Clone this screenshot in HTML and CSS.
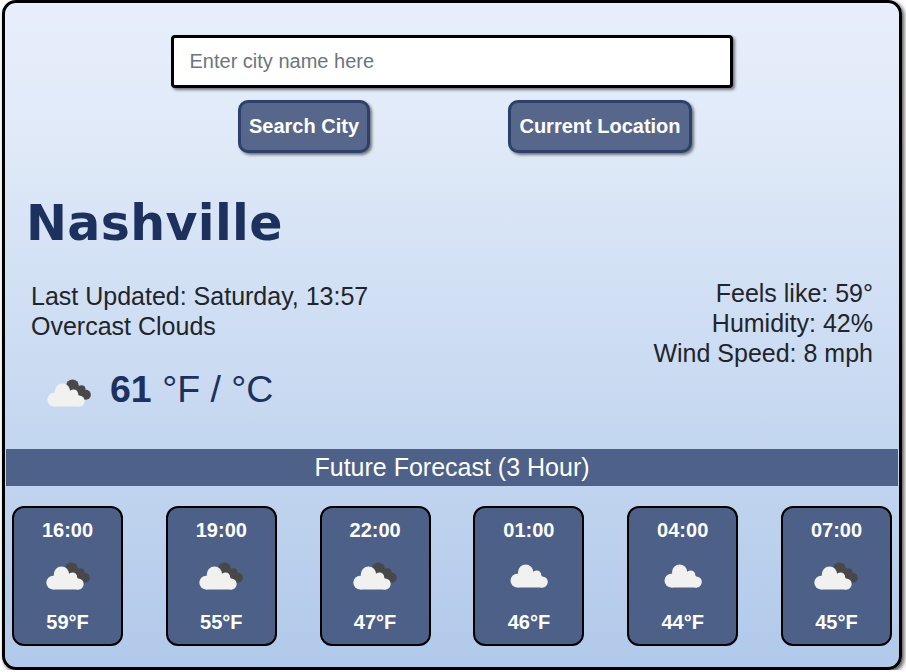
FILE: index.html
```html
<!DOCTYPE html>
<html lang="en">
<head>
<meta charset="utf-8">
<title>Weather</title>
<link rel="stylesheet" href="styles.css">
</head>
<body>
<svg class="symbols" width="0" height="0" aria-hidden="true">
  <symbol id="cloud" viewBox="32 28.5 150 150">
    <g fill="#f1f1f0"><circle cx="72" cy="117.5" r="20.5"/><circle cx="97" cy="92" r="23"/><circle cx="130" cy="101" r="14"/><circle cx="147" cy="121.5" r="16.5"/><path d="M72 138V97l25-5h20l10-3 16 12 6 8v29z"/></g>
  </symbol>
  <symbol id="clouds" viewBox="41.5 22.5 150 150">
    <g fill="#484848"><circle cx="127" cy="76" r="19"/><circle cx="154" cy="86" r="12"/><circle cx="167" cy="103" r="15"/><path d="M120 80l22-6 26 26-4 17-12 4z"/></g>
    <g fill="#f1f1f0"><circle cx="72" cy="117.5" r="20.5"/><circle cx="97" cy="92" r="23"/><circle cx="130" cy="101" r="14"/><circle cx="147" cy="121.5" r="16.5"/><path d="M72 138V97l25-5h20l10-3 16 12 6 8v29z"/></g>
  </symbol>
</svg>
<main class="card">
  <form class="search">
    <input class="city-input" type="text" placeholder="Enter city name here">
    <div class="buttons">
      <button class="btn search-btn" type="button">Search City</button>
      <button class="btn location-btn" type="button">Current Location</button>
    </div>
  </form>
  <h1 class="city">Nashville</h1>
  <section class="details">
    <div class="summary">Last Updated: Saturday, 13:57<br>Overcast Clouds</div>
    <div class="stats">Feels like: 59°<br>Humidity: 42%<br>Wind Speed: 8 mph</div>
  </section>
  <div class="current">
    <svg class="icon"><use href="#clouds"/></svg>
    <div class="temp"><strong>61</strong> °F / °C</div>
  </div>
  <h2 class="bar">Future Forecast (3 Hour)</h2>
  <section class="forecast">
    <div class="hour"><span>16:00</span><svg class="icon"><use href="#clouds"/></svg><span>59°F</span></div>
    <div class="hour"><span>19:00</span><svg class="icon"><use href="#clouds"/></svg><span>55°F</span></div>
    <div class="hour"><span>22:00</span><svg class="icon"><use href="#clouds"/></svg><span>47°F</span></div>
    <div class="hour"><span>01:00</span><svg class="icon"><use href="#cloud"/></svg><span>46°F</span></div>
    <div class="hour"><span>04:00</span><svg class="icon"><use href="#cloud"/></svg><span>44°F</span></div>
    <div class="hour"><span>07:00</span><svg class="icon"><use href="#clouds"/></svg><span>45°F</span></div>
  </section>
</main>
</body>
</html>
```
FILE: styles.css
```css
* { box-sizing: border-box; }
body {
  margin: 0;
  background: #fff;
  font-family: "Liberation Sans", Arial, sans-serif;
  color: #212529;
  overflow: hidden;
}
.symbols { display: block; height: 0; }
.card {
  width: 900px;
  height: 670px;
  margin-left: 2px;
  border: 3px solid #000;
  border-radius: 14px;
  background: linear-gradient(#e8eefb, #e0eaf8 20%, #d0dff4 45%, #bfd3ee 75%, #b1c9ea);
  box-shadow: 2px 2px 4px rgba(0, 0, 0, .7);
  display: flex;
  flex-direction: column;
}
.search {
  width: 562px;
  margin: 32px 0 0 166px;
}
.city-input {
  display: block;
  width: 562px;
  height: 53px;
  padding: 0 15.5px;
  border: 3px solid #000;
  border-radius: 4px;
  background: #fff;
  box-shadow: 2px 2px 3px rgba(0, 0, 0, .5);
  font: 20px "Liberation Sans", Arial, sans-serif;
}
.city-input::placeholder { color: #6c757d; }
.buttons {
  display: flex;
  justify-content: space-between;
  margin: 12px 41px 0 67px;
}
.btn {
  height: 53px;
  padding: 0;
  border: 3px solid #2c406b;
  border-radius: 10px;
  background: #56678b;
  box-shadow: 2px 2px 3px rgba(0, 0, 0, .5);
  color: #fff;
  font: bold 20px "Liberation Sans", Arial, sans-serif;
}
.search-btn { width: 132px; }
.location-btn { width: 184px; }
.city {
  margin: 41px 0 0 21px;
  height: 60px;
  font: bold 49px/60px "DejaVu Sans", Verdana, sans-serif;
  letter-spacing: .35px;
  color: #1d315f;
}
.details {
  display: flex;
  justify-content: space-between;
  height: 96px;
  margin: 24px 26px 0 26px;
  font-size: 25px;
  line-height: 30px;
}
.summary { padding-top: 3px; }
.stats { text-align: right; }
.current {
  display: flex;
  height: 50px;
  margin: -9px 0 0 39px;
  color: #1d315f;
}
.icon { display: block; width: 50px; height: 50px; flex: none; }
.current .icon { margin-top: 3px; }
.temp { margin-left: 16px; font-size: 37.5px; line-height: 48px; }
.bar {
  height: 37px;
  margin: 34px 1px 0;
  background: #4e6188;
  color: #fff;
  font-size: 25px;
  font-weight: 400;
  line-height: 37px;
  text-align: center;
}
.forecast {
  display: flex;
  justify-content: space-between;
  margin: 20px 7px 0;
}
.hour {
  display: flex;
  flex-direction: column;
  align-items: center;
  justify-content: space-between;
  width: 111px;
  height: 140px;
  padding: 10px 0;
  border: 2px solid #000;
  border-radius: 12px;
  background: #4c6088;
  color: #fff;
  font-size: 20px;
  font-weight: 700;
  line-height: 24px;
}
```
